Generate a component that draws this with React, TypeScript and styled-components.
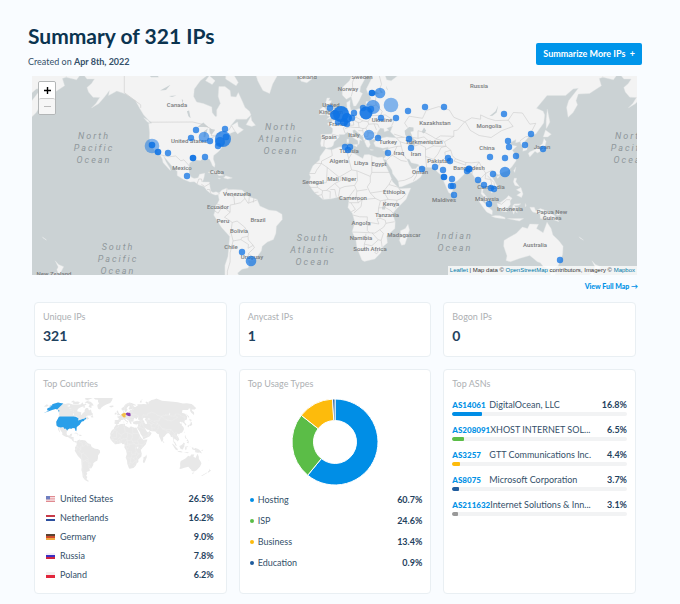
import React from "react";
import styled, { createGlobalStyle } from "styled-components";

/* ---------- geography (lon,lat pairs) ---------- */

const LAND: string[] = [
  // North America
  "-168,65.6 -164,66.5 -162,66 -163,67.5 -166,68.3 -163,69.5 -157,71.3 -150,70.5 -141,69.7 -135,69 -129,70 -124,69.5 -115,68 -108,68 -100,67.8 -96,68.2 -94,71.5 -90,69 -87,68 -85,69.5 -81,68.5 -84,66 -87,65 -90,64 -94,61.5 -94.5,59 -92.5,57 -88,56.5 -82.3,55.2 -82,53 -80,51.3 -79,51.5 -79,54 -76.5,56.5 -78,59 -77.5,62.3 -73.5,62.3 -70,61 -69.5,59 -66,58.8 -64.5,60.3 -62,57.5 -60,55 -57,53.5 -56,52 -59,50.2 -66,50.2 -70,47 -65,49 -64.5,47 -61,45.5 -65,43.5 -66.5,44.8 -70,43.7 -70.8,42 -70,41.6 -74,40.6 -75.5,38 -76,36 -77.5,34.5 -81,32 -81.3,30 -80.1,27 -80.4,25.2 -81.8,26 -82.7,28 -84,30 -88,30.3 -90,29.2 -94,29.6 -97.2,27.7 -97.7,24 -97.3,21 -95.8,18.7 -94,18.2 -91.5,18.6 -90.5,20.8 -87,21.5 -87.6,18.5 -88.5,15.9 -84,15.8 -83.4,12 -83,10 -81.5,9 -79.5,9.5 -77.4,8.7 -78,7.5 -80,7.3 -81.5,7.8 -83.5,8.7 -85.7,10.5 -87.5,13 -91,14 -94,16.1 -97,15.8 -101.5,17.7 -105.5,20 -105.5,22.5 -108.5,25.3 -112,29 -114.7,31.7 -113,28.5 -110.3,24.5 -110,23 -112,25 -115,28 -115.5,30 -117.1,32.5 -118.5,34 -120.6,34.6 -122.4,37.5 -124.2,40.3 -124,44 -124.6,48.3 -122.5,48.5 -125,50 -128,52 -130.5,54.5 -133.5,57.5 -137,58.8 -140,59.8 -146,60.8 -149,60 -151.5,59.3 -151,61 -154,59 -158,56.5 -163,54.8 -160,56.5 -157.5,58.6 -162,58.7 -165,60.5 -166,62 -163,63.2 -161,64.5 -166,64.5",
  // South America
  "-77.4,8.7 -75.5,10.7 -72,12 -71.5,10.8 -68,11 -62,10.6 -57,6 -52,4.5 -50,0 -44,-2.7 -39,-3.3 -35.2,-5.5 -35,-9 -39,-13.5 -39.3,-18 -41,-22 -45,-23.5 -48.5,-26 -49,-28.8 -53.5,-34 -58,-34.3 -57,-36.5 -58,-38.3 -62,-39 -65,-41 -63.8,-42.7 -67.5,-46 -65.8,-47.8 -69,-51 -68.3,-52.5 -65.3,-54.7 -69,-55.3 -73.5,-53 -75.5,-48 -73.5,-42 -73.5,-37 -71.5,-32 -70.3,-20 -76,-14 -81,-6 -80,-3 -80.5,-1 -78.5,1.8 -77.3,4 -78,7.5",
  // Eurasia
  "-9,37 -9.4,38.8 -8.8,41 -9.2,43.2 -2,43.4 -1.3,44.5 -1.2,46 -4.6,48 -4.5,48.6 -1.5,48.7 -1.8,49.7 0.3,49.6 1.6,50.9 4,51.8 5,53.3 8.5,53.8 8.2,56.8 10.5,57.7 10.3,55.5 11,54 14,54 17,54.7 19.8,54.4 21,55.5 21.2,57.2 23.8,57.2 24.5,58.5 23.5,59.3 30,59.9 28,60.6 22.5,60 21.3,61.5 25.3,65 22,65.8 17.5,62.2 17,60.6 18.8,60 16.5,57.5 14.3,55.5 12.8,55.5 11.2,59 8,58 5.2,59.5 5.2,62 10,64 14,67.5 19,69.8 25.5,71 31,70.3 41,67 40.5,66.3 33,66.7 35,64.3 38,64 40,64.7 44,66 44.5,68.3 54,68.5 60,69 68.5,68.5 67,71 70,73 73,71.5 73.5,68 75,72 81,73.5 87,75 95,76 104,77.7 113,74 127,73.2 140,72.5 150,71.5 160,69.8 170,70 180,69 180,65 177.5,64.7 179,62.5 171,60 163.5,59.8 162,57.5 163,56 160,53 156.7,51 155.7,55 157,57.5 163.5,61.7 160,61.5 155,59.3 142.5,59.3 135.5,54.7 140,53.5 141,52 140.3,48.5 135,43.5 131,42.7 127.7,39.8 129.4,36.5 129,35.2 126.3,34.5 126.7,37 125,38.2 124.7,39.6 121.5,39 121.7,40.7 118,39.2 118.5,37.8 122.3,37.2 119.3,35 121.8,31.8 121.8,29 119,25.5 116,22.8 113.5,22.2 110,20.5 108,21.6 105.8,19 109,13.5 109.2,11.5 106.5,9.5 105,8.7 105,10.5 102.5,12 100.9,13.4 99.9,12 99.3,9.2 100.3,8.3 102,6.2 103.4,3.5 104,1.4 103.3,1.4 101,3 100.3,6 98.3,8.2 98.7,12 97.5,16.5 94.5,16 94,18.8 92,21.5 90.5,22.5 88,21.8 87,20.8 82.5,16.7 80.2,15.5 80,12 79.3,10.3 78,8.2 76.5,9 74.8,13 73,17 72.7,20.8 70.8,20.8 69,22.3 67,24.8 61.6,25.2 57.3,25.7 56,27 51.5,27.8 50,30 48.5,30 50,26.8 51.3,25 52,24.1 54.5,24.2 56.3,26.2 56.7,24.3 59.8,22.5 57.8,19 55,17 52,15.6 45,12.8 43.4,12.7 42.7,16.5 39,21.2 38.5,23.5 35.2,28 34.9,29.5 32.6,30 34,31.2 35.5,33.5 36,36.8 32.5,36.1 30.5,36.5 27.5,37 26.3,39 29,41 35,42 41.5,41.5 37.5,44.5 39,47.2 35,46.2 36.5,45.2 33.5,44.5 33,46 30.7,46.3 28.6,44 28,42 29,41.3 26,40.7 23,40.4 24,38 23,36.5 21.7,36.8 19.4,41 19.3,42 15,44.5 13.6,45.5 12.3,45.2 12.5,44 14,42.4 16,41.8 18.5,40.2 17,40.5 16.5,38.5 15.8,38 15.7,40 12.3,41.7 10.3,43.5 8.7,44.4 6.5,43.2 3.2,43.2 3.1,41.8 -0.3,39.5 -0.8,37.7 -2,36.8 -5.5,36.1 -6.5,37",
  "-180,69 -175,67 -170,66 -173,64.3 -180,65",
  // Africa
  "-6,35.8 -2,35.1 3,36.8 10,37.3 11,37 10.5,34.5 15,32.3 19,30.3 20,32.5 23,32.6 29,30.9 32.3,31.2 32.6,30 34,27 37,21 39,16 43,12 43.3,11.5 51.2,11.9 48,4.5 41.5,-2 39,-5 40.7,-10.5 40.5,-15 35,-19.8 35.5,-24 32.7,-26 31,-30 27,-33.5 20,-34.8 18.3,-34 15,-27 14.3,-22 11.8,-17 13.7,-11 12,-5 9,-1 9.7,3.5 8.5,4.6 6,4.3 4,6.3 -2,4.8 -7.7,4.4 -13,8.7 -15,11 -17.3,14.7 -16,19 -17,21 -14.5,26 -10,29.5 -9.7,31.5",
  "49.3,-12.2 50.3,-15.8 47.2,-25 45,-25.5 43.5,-22.5 44.4,-19.8 44.2,-16.4 47.5,-15",
  // Greenland, Iceland, Arctic
  "-73,78.2 -60,82 -35,83.5 -18,80.5 -20,74 -23,70.2 -32,68.2 -38,65.7 -41.5,63 -43.5,60 -48,61 -51.5,64 -53.7,67 -51,70 -55,72 -58,75.5 -66,76",
  "-24,65.5 -20,66 -15,66.3 -13.6,65 -18.5,63.4 -22.5,63.9",
  "-62,66.5 -68,70 -75,72.5 -85,73.7 -89,71 -80,70 -73,68 -73,64.5 -66,62.5 -64.5,63.5 -68,66",
  "-80,64 -84,65.5 -86.5,64 -82,62.9",
  "-117,70 -119,72 -110,73 -102,72 -102,69 -110,68.6 -116,69.3",
  "-125,72 -123,74.3 -116,73.2 -121,71.3",
  "-90,76 -80,77 -70,80 -62,82.5 -85,82 -95,80 -96,77",
  "-82,74.6 -92,75 -90,76.5 -80,75.7",
  "52,71 56,74 67,76.8 60,75.5 57,71",
  "-59.3,47.8 -56,51.5 -55.5,49.7 -53,47.5 -55.5,47",
  "-128,50.8 -125,49.8 -123.5,48.4 -125.5,49",
  // Caribbean
  "-84.9,22 -80,23 -74.5,20.2 -77.5,19.9 -79,21.5",
  "-74.3,18.5 -73,19.9 -68.5,18.5 -71.5,17.8",
  "-78.3,18.4 -76.3,18.2 -77.2,17.8",
  // British Isles
  "-5.3,50.1 -3,51.4 -5,51.8 -4.4,53.2 -3,54 -5,54.8 -6,56.7 -5,58.5 -3,58.5 -4,57.6 -2,57.5 -3,56 -1.5,55 0.3,52.9 1.7,52.6 1.3,51.2 -2,50.7",
  "-10,52 -9.8,54.2 -7.5,55.3 -5.7,54.3 -6.3,52.2",
  // Mediterranean
  "12.5,38 15.5,38.2 15,36.8",
  "8.3,39 8.3,41 9.6,41 9.5,39.2",
  "23.7,35.4 26.2,35.2 24.5,35",
  "32.3,35 34.5,35.6 33.5,34.7",
  // Asia islands
  "80,9.7 81.8,7.5 80.6,6 79.8,7.5",
  "95.3,5.6 98,4.5 101,1.5 104,-1.5 106,-3.2 105.7,-5.8 102,-4 99,0",
  "105.3,-6.8 108,-6.3 111,-6.5 114.4,-7.7 114.4,-8.6 108,-7.8",
  "109,1.7 111.5,2.5 115,5 116.8,7 119.2,5.2 117.8,3.5 118,1 116,-1.5 115.5,-4 111.5,-3.3 110,-1.5",
  "119.5,0 120.5,1.3 125,1.5 123.5,0.5 120.5,0.3 121.5,-1 123.3,-1 121.7,-2.5 122.7,-4.8 121,-3 120.2,-5.5 119.4,-3.3",
  "131,-0.8 134,-0.8 135,-3.3 138,-1.7 144.5,-4 147.8,-6.7 150.5,-10.5 146,-8.8 143,-9.2 138,-8.3 137.8,-5.3 133,-4 132,-2.8",
  "148.5,-5.8 152,-4.2 152,-5.2 150,-6.2",
  "116,-8.4 119,-8.3 123,-8.3 126.8,-8.4 124,-10 119,-9",
  "128,1.7 128.6,0.5 128,-0.7",
  "120.6,18.4 122.2,18.3 121.6,16 124,13 121,13.7 120,16",
  "122,10.8 125,12.4 126.4,8 125.4,5.7 122.2,7.2 125,9",
  "120.2,23 121.6,25.2 120.9,22",
  "108.7,19.3 110.9,20 109.5,18.2",
  "130,33.2 131,34.2 135,35.6 137,37 139.5,38.5 140.5,41.2 142,39.6 140.8,36 139.8,35 136,33.5 134.5,34.4 131,31.2",
  "140,42 141.5,45.3 145.4,43.3 143,42",
  "142,46 142,50 142.7,54.3 144.5,49 143,47",
  // Oceania
  "113.7,-22.5 117,-20.6 122,-18 126,-14 129.5,-15 131,-12 136.8,-12.2 135.5,-15 140,-17.6 142.5,-10.8 145.3,-15 146.5,-19 150.5,-22.7 153.3,-26 153,-31 150,-37.3 146.5,-39 143.5,-38.7 140,-37.5 138,-35.5 136,-35 135.5,-34.6 131,-31.5 124,-33.2 118,-35 115,-34.3 115.7,-31.7 113.5,-26",
  "144.7,-40.8 148.2,-41 147,-43.6 145.5,-42.8",
  "172.7,-34.5 175,-36.5 178.4,-37.7 176.5,-40.5 175,-41.5 173.8,-39.3 174.7,-37.8",
  "172.7,-40.6 174.2,-41.7 171,-44.3 169,-46.6 166.5,-46",
  "164,-20.2 167,-22.3 165,-21.3",
];

const WATER: string[] = [
  "47,45 50,46.8 53,46.5 53,44.8 51,44.5 52.5,41.5 53.8,40.8 53.8,37 50,37.3 49,39.5 49.5,41 47.5,43",
  "58.5,44.5 60,46.5 61.5,45 59.8,43.7",
  "-92,46.7 -88,48.8 -84.5,46.6 -88,46.7",
  "-87.8,42 -87.5,44.8 -85,46 -86.2,43.5 -86.7,41.8",
  "-84,46 -80,45.5 -82.2,43.2 -83.7,43.8",
  "-83,41.7 -79,42.8 -81.5,41.6",
  "-79.6,43.3 -76.3,44 -77,43.3",
  "-99,53.5 -97.5,53.8 -96.5,50.6 -98,51.5",
  "-125,66 -120,67 -118,65 -123,65",
  "-117,61 -110,62.8 -113,61.2",
  "-111,59.2 -106,59.3 -109,58.8",
  "-102.5,58 -101.5,57.8 -102,56.5",
  "104,51.6 108,53.5 109.8,55.7 108.7,53 106,51.7",
  "31.8,-0.5 34,0.3 34,-2.3 32,-2.4",
  "30,61.8 32.5,60.3 31,60.1",
  "34.5,62.5 36,61 35,61.5",
];

const BORDERS: string[] = [
  // Americas
  "-124,48.9 -95,49 -89,48 -83,46 -82.5,42.5 -79,43 -75,45 -71,45.2 -69,47.3 -67,45",
  "-141,69.7 -141,60.3 -137,58.8 -130,56 -130,54.8",
  "-117,32.5 -111,31.3 -108.3,31.6 -106.5,31.8 -103,29 -101,29.6 -97.3,25.9",
  "-92.2,14.6 -91,17.8 -89.2,17.8 -88.8,15.9",
  "-89.3,14.4 -87,13 -83.5,15",
  "-85.5,11 -83.8,11 -82.8,8.3",
  "-77.4,7.8 -77.3,8.6",
  "-72,12 -72.5,8 -67.5,6.2 -67,1.2 -70,0.6 -70,-4.2",
  "-67,1.2 -63,2.2 -60,5 -61.3,8",
  "-60,5 -58,1.8 -52,4",
  "-57.2,5.8 -57.5,2",
  "-54,5.6 -54.5,2.3",
  "-79,1.4 -75.2,0 -70,-4.2 -73.8,-7.5 -70.6,-9.5 -68.6,-11 -69.5,-17.5",
  "-80.3,-3.4 -78,-4.8 -75.2,0",
  "-70.4,-18.3 -69.5,-17.5 -68,-22.8 -70,-30 -70,-35 -71.8,-40 -72,-46 -72.5,-51 -68.4,-52.4",
  "-68.6,-11 -65.3,-10 -60.3,-14 -57.7,-18 -58,-20 -62.2,-20.7 -62.8,-22 -68,-22.8",
  "-58,-20 -57.8,-22.2 -54.5,-25.5 -58,-27.3 -57.7,-25 -62.8,-22",
  "-54.5,-25.5 -53.7,-27 -57.6,-30.2 -53.5,-33.7",
  "-57.6,-30.2 -58.3,-34",
  // Europe
  "-7.2,37.2 -6.8,42 -8.8,42",
  "-1.8,43.4 3,42.4",
  "2.5,51 6,49.5 8.2,49 7.6,47.6 6,46.2 7,44 7.5,43.8",
  "6,49.5 6,51.8 7,53.3",
  "7.6,47.6 10.5,47.5 13,47.6 12.2,50.3 14.5,51 14.2,53.9",
  "7,46 10.5,46.8 13.6,46.5",
  "12.2,50.3 15,49 17,48.7 19,49.5 22.5,49.1 24,50.7 23.5,54 19.8,54.4",
  "14.5,51 19,49.5",
  "13.6,46.5 16.5,46.5 16,48.7",
  "16.5,46.5 19,46 21,46.2 22.9,48 22.5,49.1",
  "16,45 19,45 19.5,43.2 18.5,42.5",
  "19,46 19,45",
  "21,46.2 22.5,44 28,43.9",
  "22.5,44 22.5,42.3 21,42 19.5,43.2",
  "20,39.7 21,41 26.3,41.7 28,42",
  "22.9,48 26.5,48.2 28.2,45.4",
  "26.5,48.2 29,48 30,46.4",
  "24,51.7 31,51.8 34,52 40,49.6 38.3,47.3",
  "31,51.8 32,53.5 28,56 27.5,57.5 28,59.4",
  "28,56 26.6,55.7 23.5,54",
  "21.2,56.2 26.6,55.7",
  "24.5,57.8 27.5,57.5",
  "30,61 31.5,63 30,65.6 29,69 25.8,69.7 20.5,69 16,68 12,63.5 12.3,61 11.3,59.1",
  "24,65.8 23.7,68 20.5,69",
  // Middle East and Asia
  "36,36 42,37.1 44.8,37.2 44,39.5 41.5,41.5 46.5,41.8 48.5,41.8",
  "44,39.5 48.8,38.4",
  "40,43.4 46.5,41.8",
  "44.8,37.2 46,33 48.3,30",
  "35.7,32.7 39,32.2 42,37.1",
  "39,32.2 44.7,29.2 48.4,28.6",
  "35,29.4 37.5,31.5 39,32.2",
  "42.8,16.4 47,17 52,19 55,22.6 55,20 53,16.7",
  "52,22.9 55,22.6 56,24.6",
  "53.9,37.3 57,38.2 61,36.5 61,31.5 61.8,25.2",
  "61,31.5 66.3,29.8 69.5,33 71.5,36.5 74.8,37.2 67.8,37.2 66.5,37.4 61,35.3",
  "52.5,41.7 56,41.3 60,42 66.5,37.4",
  "56,41.3 56,45 61,44 66,42 68,41 71,42.5 80,42.3 80,45 82.5,45.3 87.3,49.1",
  "68,41 73,40 73.8,39.5 74.8,37.2",
  "73.8,39.5 80,42.3",
  "49,46.5 47,48.5 50,51.5 59,50.6 61.5,53.8 70,55.3 77,54 80,51 87.3,49.1",
  "87.3,49.1 92,50.8 98,50.2 98,52 103,50.5 108,49.6 116.5,49.8 119.8,47 112,45 105,41.7 97,42.7 91,45.2 87.8,49",
  "116.5,49.8 120,53 126,52.8 131,48 135,48.4 131,43",
  "124.5,40 128,42 130.6,42.4",
  "126.7,37.8 128.3,38.6",
  "68.2,23.7 71,28 74.5,31 74,34 78,35 79,32 81,30.2 88,28 92,27.8 97,28.3 98.5,25.5 101.5,21.5 105.5,23.2 108,21.6",
  "74.8,37.2 78,35",
  "81,30.2 80.2,28.8 88,26.4 88,28",
  "89,22 88.2,25.5 92.3,25 92.3,21",
  "92.3,22 94.5,25 97,28.3",
  "101.5,21.5 98,18 98.7,13",
  "101.5,21.5 101,18 104.7,17.5 105.5,14.5 102.5,12.2",
  "102.5,20 107,15.5 107.5,12.5 104.5,10.5",
  "100,6.5 102,6",
  "109.6,2 112,1.2 115.5,4.2 117.8,4.2",
  "141,-2.6 141,-9.1",
  // Africa
  "-2,35.1 -1.5,32 -8.7,28.8 -8.7,27.4 -13,27.6",
  "-8.7,27.4 -4.8,25 3,19 11.5,23.5 9.5,30.2 8.2,34.7 8.5,36.9",
  "9.5,30.2 11.5,33.1",
  "-8.7,27.4 -12,23.4 -13,21.3 -17,21.3",
  "-4.8,25 -5.5,15.5 -12,14.8 -16.4,16.5",
  "-12,14.8 -11.4,12.4 -16.7,12.4",
  "-11.4,12.4 -8,10.2 -5.5,10.4 0.2,14.9 4.2,16.8 4.2,19.2",
  "-8,10.2 -8.4,7.6 -11.4,6.9",
  "-13.2,9 -10.7,9.3",
  "-8.4,7.6 -7.5,4.4",
  "-5.5,10.4 -2.8,9.7 -3,5.1",
  "-2.8,11 0.2,11 1.2,6.1",
  "0.2,14.9 3.6,11.7 2.7,6.4",
  "3.6,11.7 7,13 13.5,13.7 15.5,17 15,23 11.5,23.5",
  "15,23 24,19.5 25,22 25,31.6",
  "25,22 36.8,22",
  "24,19.5 24,15.7 22,12.7 24,8.7 27.4,5.1 30.8,3.5 36,4.4 41.9,3.9 45,5 48,8 43,11.5",
  "13.5,13.7 15,10 14.5,6 16,2.2 9.8,2.2",
  "13.5,11 8.8,4.8",
  "15,10 22,11",
  "14.5,6 18.5,4.3 27.4,5.1",
  "24,8.7 33,10 36.5,14.3 38.5,17.8",
  "33,10 34,7.8 36,4.4",
  "36.5,14.3 42.5,12.5",
  "41.9,3.9 41,-1.6",
  "34,4 34,-1 37.7,-3 39.2,-4.7",
  "30.8,3.5 29.6,-1.3 34,-1",
  "29.6,-1.3 29.3,-4.5 30.7,-8.2 34,-9.5 34.5,-11.5 40.4,-10.5",
  "16,2.2 18.5,4.3 17.8,-0.5 13,-4.6",
  "11,2.2 14,-2.3 11.2,-3.9",
  "12.3,-6 16.9,-7.2 22,-7.3 22,-11 24,-11 24,-13 22,-13 22,-16.2 23.4,-17.6 11.8,-17.2",
  "24,-11 29.8,-12 28.5,-8.5 30.7,-8.2",
  "23.4,-17.6 27,-17.9 30.4,-15.7 33,-14 34.5,-11.5",
  "21,-18.3 21,-22 20,-24.8 20,-28.5 16.5,-28.6",
  "20,-24.8 25,-25.7 29.4,-22.2 31.3,-22.4 32.8,-18 30.4,-15.7",
  "25.2,-17.8 29.4,-22.2",
  "31.3,-22.4 32,-26.8",
  "27,-29.6 28.6,-28.6 29.4,-29.6 28,-30.6 27,-29.6",
];

const USA: string[] = [
  "-124.6,48.3 -122.5,49 -95,49 -89,48 -84.5,46.5 -82.5,45.3 -82.5,42.5 -79,43 -76.3,44.2 -75,45 -71,45.2 -69,47.3 -67,45 -70,43.7 -70,41.6 -74,40.6 -75.5,38 -76,36 -81,32 -80.1,27 -80.4,25.2 -81.8,26 -82.7,28 -84,30 -88,30.3 -90,29.2 -94,29.6 -97.2,27.7 -97.3,25.9 -101,29.6 -103,29 -106.5,31.8 -111,31.3 -117.1,32.5 -120.6,34.6 -124.2,40.3",
  "-168,65.6 -164,66.5 -162,66 -166,68.3 -157,71.3 -150,70.5 -141,69.7 -141,60.3 -137,58.8 -131,55 -134,58.5 -140,59.8 -146,60.8 -151.5,59.3 -158,56.5 -166,53.5 -160,56.5 -157.5,58.6 -162,58.7 -166,62 -161,64.5",
];
const GERMANY = ["3.5,51.3 7,53.6 11,54.8 14,54 14.8,51 12.4,50.2 13.2,48.5 12,47.4 7.6,47.6 6,50"];
const POLAND = ["14.2,53.9 17,55 23.5,54.3 24,50.7 22.5,49.1 18.8,49.4 14.8,51"];

type Projection = (lon: number, lat: number) => [number, number];

const mercator: Projection = (lon, lat) => [
  302.5 + lon * 1.491,
  130 - 85.4 * Math.log(Math.tan(Math.PI / 4 + (lat * Math.PI) / 360)),
];

const ROBINSON = [1, 0.9986, 0.9954, 0.99, 0.9822, 0.973, 0.96, 0.9427, 0.9216, 0.8962, 0.8679, 0.835, 0.7986, 0.7597, 0.7186, 0.6732, 0.6213, 0.5722, 0.5322];

const robinson: Projection = (lon, lat) => {
  const step = Math.abs(lat) / 5;
  const low = Math.floor(step);
  const factor = ROBINSON[low] + (ROBINSON[low + 1] - ROBINSON[low]) * (step - low);
  return [76 + lon * 0.552 * factor, 49 - lat * 0.625];
};

const trace = (shapes: string[], project: Projection, closed = true) =>
  shapes
    .map((shape) => {
      const points = shape.split(" ").map((pair) => {
        const [lon, lat] = pair.split(",").map(Number);
        return project(lon, lat).map((n) => n.toFixed(1)).join(" ");
      });
      return "M" + points.join("L") + (closed ? "Z" : "");
    })
    .join("");

/* ---------- map annotations ---------- */

const LABELS: [string, number, number][] = [
  ["Canada", 145, 28], ["United States", 157, 64], ["Mexico", 150, 91], ["Cuba", 185, 95],
  ["Venezuela", 205, 117], ["Ecuador", 186, 130], ["Peru", 191, 144], ["Brazil", 226, 143],
  ["Bolivia", 207, 154], ["Chile", 199, 170], ["Uruguay", 220, 180], ["Norway", 316, 12],
  ["United", 299, 28], ["Kingdom", 299, 35], ["France", 306, 47], ["Spain", 297, 60],
  ["Italy", 322, 58], ["Ukraine", 350, 43], ["Turkey", 356, 65], ["Tunisia", 317, 74],
  ["Algeria", 307, 84], ["Libya", 329, 86], ["Egypt", 347, 87], ["Mali", 301, 102],
  ["Niger", 317, 102], ["Senegal", 281, 105], ["Cameroon", 321, 121], ["Ethiopia", 362, 115],
  ["Kenya", 359, 127], ["Tanzania", 355, 138], ["Angola", 329, 146], ["Namibia", 329, 161],
  ["Madagascar", 372, 158], ["South Africa", 338, 172], ["Iraq", 367, 76], ["Iran", 384, 77],
  ["Turkmenistan", 392, 65], ["Oman", 388, 95], ["Kazakhstan", 403, 46], ["Pakistan", 407, 84],
  ["Russia", 447, 9], ["Mongolia", 457, 49], ["China", 455, 71], ["Bangladesh", 437, 91],
  ["Maldives", 412, 123], ["Cambodia", 459, 110], ["Malaysia", 455, 122], ["Indonesia", 478, 132],
  ["Papua New", 520, 135], ["Guinea", 520, 141], ["Japan", 510, 70], ["Australia", 503, 168],
  ["New Zealand", 22, 197], ["Iceland", 275, 0], ["Sweden", 330, 0],
];

const OCEANS: [string[], number, number][] = [
  [["North", "Pacific", "Ocean"], 62, 60],
  [["South", "Pacific", "Ocean"], 86, 171],
  [["North", "Atlantic", "Ocean"], 249, 51],
  [["South", "Atlantic", "Ocean"], 281, 162],
  [["Indian", "Ocean"], 423, 160],
  [["North", "Pacific", "Ocean"], 599, 60],
];

/* x, y, radius, opacity */
const SPOTS: [number, number, number?, number?][] = [
  [120, 70, 7.3, 0.5], [120, 69, 3.3, 0.9], [126, 76, 3.3, 0.9], [136, 77], [164, 54], [159, 62],
  [172, 61, 5.3, 0.6], [178, 65], [193, 53], [191, 63, 8, 0.75], [188, 66, 5], [186, 70], [194, 61, 3.3], [161, 82, 3.3, 0.95], [173, 81],
  [155, 100], [210, 176], [219, 185, 5.3, 0.7], [298, 32], [340, 17, 3.3, 0.95], [348, 17, 5.3, 0.65],
  [359, 29, 7.3, 0.5], [341, 31, 7, 0.6], [334, 37, 6.5, 0.9], [331, 32], [339, 33], [322, 37], [309, 38, 8, 0.9],
  [303, 39, 5, 0.9], [315, 42, 5, 0.9], [315, 48], [306, 46], [320, 42], [312, 46, 4, 0.9], [349, 42], [364, 42], [376, 35],
  [393, 31], [337, 59, 5.3, 0.6], [346, 62], [313, 71], [318, 71], [316, 74], [356, 77], [377, 63],
  [379, 72], [390, 93], [403, 91], [412, 31], [472, 38], [499, 58], [476, 65], [477, 71], [493, 69],
  [511, 73], [458, 81], [473, 82], [484, 80], [473, 96, 5.3, 0.7], [461, 98], [416, 82], [418, 85],
  [411, 94], [412, 101, 3.3, 0.95], [420, 103], [419, 110], [421, 110], [422, 119], [435, 95],
  [437, 93, 3.5, 0.9], [446, 104], [452, 109], [459, 112], [462, 113], [457, 128], [528, 184],
];

/* ---------- data ---------- */

const STATS = [
  { label: "Unique IPs", value: "321" },
  { label: "Anycast IPs", value: "1" },
  { label: "Bogon IPs", value: "0" },
];

const COUNTRIES = [
  { code: "us", name: "United States", share: "26.5%" },
  { code: "nl", name: "Netherlands", share: "16.2%" },
  { code: "de", name: "Germany", share: "9.0%" },
  { code: "ru", name: "Russia", share: "7.8%" },
  { code: "pl", name: "Poland", share: "6.2%" },
];

const FLAGS: Record<string, string[]> = {
  us: ["#e08a90", "#f4d9dc", "#e08a90", "#f4d9dc", "#e08a90"],
  nl: ["#c83a48", "#ffffff", "#2d4f9e"],
  de: ["#5a4434", "#cf4a2c", "#f0a840"],
  ru: ["#f1eef8", "#3a2fc4", "#cf2740"],
  pl: ["#f3eeee", "#e2263c"],
};

const USAGE = [
  { name: "Hosting", value: 60.7, color: "#008ee6" },
  { name: "ISP", value: 24.6, color: "#5bbd47" },
  { name: "Business", value: 13.4, color: "#fdbb0c" },
  { name: "Education", value: 0.9, color: "#1f5c9e" },
];

const ASNS = [
  { asn: "AS14061", name: "DigitalOcean, LLC", value: 16.8, color: "#008ee6" },
  { asn: "AS208091", name: "XHOST INTERNET SOL...", value: 6.5, color: "#5bbd47" },
  { asn: "AS3257", name: "GTT Communications Inc.", value: 4.4, color: "#fdbb0c" },
  { asn: "AS8075", name: "Microsoft Corporation", value: 3.7, color: "#1f5c9e" },
  { asn: "AS211632", name: "Internet Solutions & Inn...", value: 3.1, color: "#999999" },
];

/* ---------- styles ---------- */

const GlobalStyle = createGlobalStyle`
  * { box-sizing: border-box; }
  body {
    margin: 0;
    background: #f9fcff;
    color: #34506a;
    font: 9px/12px Lato, "Open Sans", sans-serif;
  }
  button { font: inherit; padding: 0; cursor: pointer; }
  a { text-decoration: none; }
`;

const Page = styled.main`
  padding: 22px 38px 11px 28px;
`;

const Header = styled.header`
  display: flex;
  justify-content: space-between;
  align-items: flex-end;
  padding-bottom: 8px;
`;

const Title = styled.h1`
  margin: 0 0 6px;
  color: #0b3450;
  font-size: 21px;
  line-height: 28px;
  font-weight: 700;
`;

const Created = styled.p`
  margin: 0;
`;

const PrimaryButton = styled.button`
  height: 22px;
  margin-bottom: 3px;
  padding: 0 7px;
  border: 0;
  border-radius: 2px;
  background: #0095ea;
  color: #fff;
  font-weight: 700;
  white-space: pre;
`;

const MapFrame = styled.section`
  position: relative;
  height: 199px;
  margin: 0 5px 0 4px;
  background: #cbd2d4;
  overflow: hidden;
`;

const WorldSvg = styled.svg`
  display: block;
  width: 100%;
  height: 100%;
`;

const CountryLabel = styled.text`
  fill: #787b7d;
  font: 500 6px Roboto, sans-serif;
  text-anchor: middle;
  dominant-baseline: central;
`;

const OceanLabel = styled.text`
  fill: #8f979b;
  font: italic 9px Roboto, sans-serif;
  letter-spacing: 2px;
  text-anchor: middle;
  dominant-baseline: central;
`;

const ZoomControl = styled.div`
  position: absolute;
  top: 5px;
  left: 6px;
  width: 18px;
  border: 1px solid #b3b6b7;
  border-radius: 2px;
  background: #fff;
`;

const ZoomButton = styled.button<{ $muted?: boolean }>`
  display: flex;
  align-items: center;
  justify-content: center;
  width: 100%;
  height: 16px;
  border: 0;
  border-radius: 2px;
  background: ${(p) => (p.$muted ? "#f6f6f6" : "#fff")};
  color: ${(p) => (p.$muted ? "#bbb" : "#000")};
  & + & { border-top: 1px solid #ccc; }
`;

const Attribution = styled.div`
  position: absolute;
  right: 0;
  bottom: 0;
  padding: 0 2px;
  background: rgba(255, 255, 255, 0.75);
  color: #333;
  font: 6px/9px "Liberation Sans", sans-serif;
  white-space: nowrap;
  a { color: #0078a8; }
`;

const MapFooter = styled.div`
  display: flex;
  justify-content: flex-end;
  padding: 5px 4px 10px;
`;

const MapLink = styled.a`
  color: #0091e6;
  font-size: 7px;
  font-weight: 900;
`;

const Grid = styled.div`
  display: grid;
  grid-template-columns: repeat(3, minmax(0, 1fr));
  gap: 12px;
  margin: 0 6px;
`;

const Card = styled.section<{ $tall?: boolean }>`
  min-height: ${(p) => (p.$tall ? "225px" : "55px")};
  padding: 8px;
  border: 1px solid #e9eff3;
  border-radius: 4px;
  background: #fff;
`;

const CardTitle = styled.h2`
  margin: 0;
  color: #adb0b3;
  font-size: 9px;
  line-height: 12px;
  font-weight: 400;
`;

const StatValue = styled.div`
  margin-top: 3px;
  color: #1f425e;
  font-size: 14px;
  line-height: 20px;
  font-weight: 700;
`;

const MiniMap = styled.svg`
  display: block;
  width: 100%;
  height: 88px;
  margin: 8px 0 3px;
`;

const Donut = styled.svg`
  display: block;
  width: 86px;
  height: 86px;
  margin: 9px auto 4px;
`;

const List = styled.ul`
  margin: 0;
  padding: 0 4px 0 3px;
  list-style: none;
`;

const Row = styled.li<{ $height: number; $gap: number }>`
  display: flex;
  align-items: center;
  gap: ${(p) => p.$gap}px;
  height: ${(p) => p.$height}px;
`;

const UsageList = styled(List)`
  padding: 0 0 0 2px;
`;

const AsnList = styled(List)`
  padding: 8px 0 0;
`;

const Share = styled.strong`
  margin-left: auto;
  color: #1f425e;
`;

const FlagSvg = styled.svg`
  width: 9px;
  height: 6px;
`;

const Dot = styled.span<{ $color: string }>`
  width: 4px;
  height: 4px;
  border-radius: 50%;
  background: ${(p) => p.$color};
`;

const AsnItem = styled.li`
  height: 25px;
`;

const AsnLine = styled.div`
  display: flex;
  line-height: 14px;
  white-space: nowrap;
`;

const AsnLink = styled.a`
  min-width: 37px;
  color: #0091e6;
  font-size: 8px;
  font-weight: 900;
`;

const Track = styled.div`
  height: 4px;
  border-radius: 2px;
  background: #f2f3f4;
  overflow: hidden;
`;

const Fill = styled.div<{ $color: string }>`
  height: 100%;
  border-radius: 1px;
  background: ${(p) => p.$color};
`;

/* ---------- components ---------- */

function WorldMap() {
  const land = trace(LAND, mercator);
  const lakes = trace(WATER, mercator);
  const borders = trace(BORDERS, mercator, false);
  return (
    <WorldSvg viewBox="0 0 605 199" preserveAspectRatio="xMidYMid slice" role="img" aria-label="IP locations">
      <defs>
        <g id="world">
          <path d={land} fill="#f3f3f3" stroke="#e3e6e6" strokeWidth="0.4" strokeLinejoin="round" />
          <path d={lakes} fill="#cbd2d4" />
          <path d={borders} fill="none" stroke="#cbcbcb" strokeWidth="0.6" strokeLinejoin="round" />
        </g>
      </defs>
      <use href="#world" />
      <use href="#world" x="-536.8" />
      <use href="#world" x="536.8" />
      {OCEANS.map(([lines, x, y]) =>
        lines.map((line, i) => (
          <OceanLabel key={line + x} x={x} y={y + i * 12}>{line}</OceanLabel>
        )),
      )}
      {LABELS.map(([name, x, y]) => (
        <CountryLabel key={name} x={x} y={y}>{name}</CountryLabel>
      ))}
      {SPOTS.map(([x, y, r = 3.2, o = 0.75], i) => (
        <circle key={i} cx={x} cy={y} r={r} fill="#0f73e4" fillOpacity={o} />
      ))}
    </WorldSvg>
  );
}

function CountryMap() {
  return (
    <MiniMap viewBox="0 0 174 88" role="img" aria-label="Top countries">
      <path d={trace(LAND, robinson)} fill="#e8e8e8" />
      <path d={trace(WATER, robinson)} fill="#fff" />
      <path d={trace(BORDERS, robinson, false)} fill="none" stroke="#f1f1f1" strokeWidth="0.4" />
      <path d={trace(USA, robinson)} fill="#2a9fe9" />
      <path d={trace(GERMANY, robinson)} fill="#f3c04a" />
      <path d={trace(POLAND, robinson)} fill="#8a3fb0" />
    </MiniMap>
  );
}

function Flag({ code }: { code: string }) {
  const stripes = FLAGS[code];
  const h = 6 / stripes.length;
  return (
    <FlagSvg viewBox="0 0 9 6" aria-hidden="true">
      {stripes.map((color, i) => (
        <rect key={i} y={i * h} width="9" height={h} fill={color} />
      ))}
      {code === "us" && <rect width="4" height="3.4" fill="#6f7fc0" />}
    </FlagSvg>
  );
}

function UsageDonut() {
  const total = USAGE.reduce((sum, u) => sum + u.value, 0);
  const at = (t: number, r: number) =>
    `${(43 + r * Math.sin(t * 2 * Math.PI)).toFixed(2)} ${(43 - r * Math.cos(t * 2 * Math.PI)).toFixed(2)}`;
  let start = 0;
  return (
    <Donut viewBox="0 0 86 86" role="img" aria-label="Usage types">
      {USAGE.map((u) => {
        const end = start + u.value / total;
        const large = end - start > 0.5 ? 1 : 0;
        const d = `M${at(start, 43)}A43 43 0 ${large} 1 ${at(end, 43)}L${at(end, 21.5)}A21.5 21.5 0 ${large} 0 ${at(start, 21.5)}Z`;
        start = end;
        return <path key={u.name} d={d} fill={u.color} stroke="#fff" strokeWidth="1" />;
      })}
    </Donut>
  );
}

export default function App() {
  return (
    <>
      <GlobalStyle />
      <Page>
        <Header>
          <div>
            <Title>Summary of 321 IPs</Title>
            <Created>Created on <strong>Apr 8th, 2022</strong></Created>
          </div>
          <PrimaryButton type="button">Summarize More IPs  +</PrimaryButton>
        </Header>

        <MapFrame>
          <WorldMap />
          <ZoomControl>
            <ZoomButton type="button" aria-label="Zoom in">
              <svg width="7" height="7" viewBox="0 0 7 7"><path d="M3.5 0v7M0 3.5h7" stroke="currentColor" strokeWidth="1.4" /></svg>
            </ZoomButton>
            <ZoomButton type="button" aria-label="Zoom out" $muted>
              <svg width="7" height="7" viewBox="0 0 7 7"><path d="M0 3.5h7" stroke="currentColor" strokeWidth="1" /></svg>
            </ZoomButton>
          </ZoomControl>
          <Attribution>
            <a href="#leaflet">Leaflet</a> | Map data © <a href="#osm">OpenStreetMap</a> contributors, Imagery © <a href="#mapbox">Mapbox</a>
          </Attribution>
        </MapFrame>
        <MapFooter>
          <MapLink href="#map">View Full Map →</MapLink>
        </MapFooter>

        <Grid>
          {STATS.map((s) => (
            <Card key={s.label}>
              <CardTitle>{s.label}</CardTitle>
              <StatValue>{s.value}</StatValue>
            </Card>
          ))}
          <Card $tall>
            <CardTitle>Top Countries</CardTitle>
            <CountryMap />
            <List>
              {COUNTRIES.map((c) => (
                <Row key={c.code} $height={19} $gap={5}>
                  <Flag code={c.code} />
                  {c.name}
                  <Share>{c.share}</Share>
                </Row>
              ))}
            </List>
          </Card>
          <Card $tall>
            <CardTitle>Top Usage Types</CardTitle>
            <UsageDonut />
            <UsageList>
              {USAGE.map((u) => (
                <Row key={u.name} $height={21} $gap={4}>
                  <Dot $color={u.color} />
                  {u.name}
                  <Share>{u.value.toFixed(1)}%</Share>
                </Row>
              ))}
            </UsageList>
          </Card>
          <Card $tall>
            <CardTitle>Top ASNs</CardTitle>
            <AsnList>
              {ASNS.map((a) => (
                <AsnItem key={a.asn}>
                  <AsnLine>
                    <AsnLink href={`#${a.asn}`}>{a.asn}</AsnLink>
                    {a.name}
                    <Share>{a.value.toFixed(1)}%</Share>
                  </AsnLine>
                  <Track>
                    <Fill $color={a.color} style={{ width: `${a.value}%` }} />
                  </Track>
                </AsnItem>
              ))}
            </AsnList>
          </Card>
        </Grid>
      </Page>
    </>
  );
}
